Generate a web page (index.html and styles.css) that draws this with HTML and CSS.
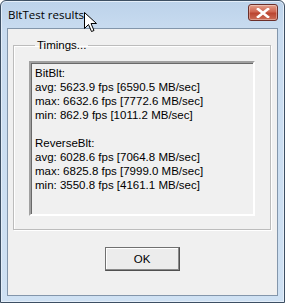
FILE: index.html
```html
<!DOCTYPE html>
<html>
<head>
<meta charset="utf-8">
<link rel="stylesheet" href="styles.css">
</head>
<body>
<div class="window">
  <div class="titlebar">
    <span class="title">BltTest results</span>
    <div class="close">
      <svg width="14" height="10" viewBox="0 0 14 10"><path d="M2 1 L12 9 M12 1 L2 9" stroke="#fff" stroke-width="2.6" stroke-linecap="square"/></svg>
    </div>
  </div>
  <div class="client">
    <fieldset class="group">
      <legend class="legend">Timings...</legend>
      <div class="output">
        <div class="line">BitBlt:</div>
        <div class="line">avg: 5623.9 fps [6590.5 MB/sec]</div>
        <div class="line">max: 6632.6 fps [7772.6 MB/sec]</div>
        <div class="line">min: 862.9 fps [1011.2 MB/sec]</div>
        <div class="line">&nbsp;</div>
        <div class="line">ReverseBlt:</div>
        <div class="line">avg: 6028.6 fps [7064.8 MB/sec]</div>
        <div class="line">max: 6825.8 fps [7999.0 MB/sec]</div>
        <div class="line">min: 3550.8 fps [4161.1 MB/sec]</div>
      </div>
    </fieldset>
    <div class="buttons">
      <button class="ok">OK</button>
    </div>
  </div>
  <svg class="cursor" width="14" height="22" viewBox="0 0 14 22">
    <path d="M0.5 0.5 L0.5 16.5 L4.5 12.5 L7.5 19.5 L10 18.5 L7 11.5 L12.5 11.5 Z" fill="#fff" stroke="#000" stroke-width="1"/>
  </svg>
</div>
</body>
</html>
```
FILE: styles.css
```css
html, body {
  margin: 0;
  padding: 0;
  background: #ffffff;
}
.window {
  position: relative;
  width: 285px;
  height: 303px;
  box-sizing: border-box;
  border: 1px solid #3d4f63;
  border-radius: 6px 6px 0 0;
  background: linear-gradient(#bcd2ea, #c9dcf0 30px, #cfe1f3);
  padding: 0 6px 6px 6px;
  display: flex;
  flex-direction: column;
  box-shadow: inset 0 0 0 1px #e4eef9;
}
.titlebar {
  height: 27px;
  display: flex;
  align-items: center;
  justify-content: space-between;
  padding-left: 1px;
}
.title {
  font-family: "Open Sans", "Liberation Sans", sans-serif;
  font-size: 11.5px;
  color: #000;
  margin-top: -1px;
}
.close {
  width: 30px;
  height: 17px;
  box-sizing: border-box;
  border: 1px solid #6b2f2a;
  border-radius: 3px;
  background: linear-gradient(#e3a08c, #cf6651 45%, #ba4531 55%, #cc6e57);
  display: flex;
  align-items: center;
  justify-content: center;
  margin-right: 0px;
  margin-top: -4px;
  box-shadow: inset 0 0 0 1px rgba(255,255,255,0.35);
}
.client {
  flex: 1;
  background: #f0f0f0;
  border: 1px solid #8396ab;
  display: flex;
  flex-direction: column;
  padding: 10px 6px 0 5px;
}
.group {
  margin: 0;
  padding: 10px 15px 13px 15px;
  border: 1px solid #bcbcbc;
  border-radius: 0;
  box-shadow: inset 1px 1px 0 #ffffff, 1px 1px 0 #ffffff;
}
.legend {
  font-family: "Liberation Sans", Arial, sans-serif;
  font-size: 11.5px;
  color: #000;
  padding: 0 2px;
  margin-left: 6px;
}
.output {
  height: 155px;
  box-sizing: border-box;
  border-style: solid;
  border-width: 2px;
  border-color: #a0a0a0 #ffffff #ffffff #a0a0a0;
  box-shadow: inset 1px 1px 0 #696969;
  background: #f0f0f0;
  padding: 3px 0 0 4px;
  font-family: "Liberation Sans", Arial, sans-serif;
  font-size: 11.5px;
  line-height: 14px;
  color: #000;
}
.buttons {
  display: flex;
  justify-content: center;
  padding-top: 17px;
}
.ok {
  width: 75px;
  height: 24px;
  box-sizing: border-box;
  background: #ececec;
  border: 1px solid #707070;
  border-right-color: #505050;
  border-bottom-color: #505050;
  box-shadow: inset -1px -1px 0 #8a8a8a, inset 1px 1px 0 #ffffff;
  font-family: "Liberation Sans", Arial, sans-serif;
  font-size: 11.5px;
  color: #000;
  padding: 0;
}
.cursor {
  position: absolute;
  left: 83px;
  top: 11px;
}
```
